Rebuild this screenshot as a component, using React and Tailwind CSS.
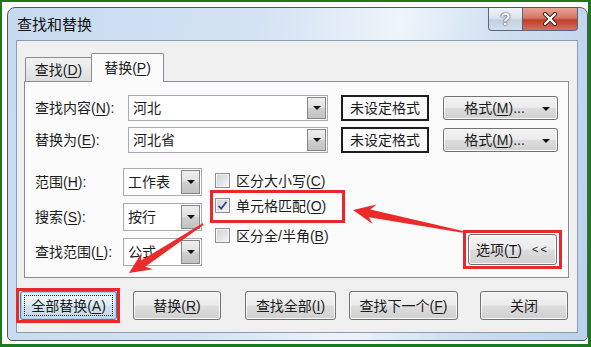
import React from "react";

const U = ({ c }) => <span className="underline underline-offset-[2px] decoration-[1px]">{c}</span>;

const btnCls =
  "flex items-center justify-center rounded-[3px] border border-[#707070] bg-[linear-gradient(#f3f3f3_0%,#ebebeb_48%,#dddddd_52%,#d0d0d0_100%)] shadow-[inset_0_0_0_1px_#fbfbfb] text-[14px] leading-none text-[#1b1b1b]";

function Arrow() {
  return <div className="w-0 h-0 border-x-[4px] border-x-transparent border-t-[4px] border-t-[#111]" />;
}

function DropBtn() {
  return (
    <div className="ml-auto h-full w-[19px] flex items-center justify-center border border-[#858585] bg-[linear-gradient(#eeeeee_0%,#e0e0e0_50%,#cfcfcf_52%,#c2c2c2_100%)]">
      <Arrow />
    </div>
  );
}

function Combo({ text, w }) {
  return (
    <div className={`flex items-center h-full ${w} border border-[#a9abb2] bg-white p-[1px]`}>
      <span className="pl-[3px] text-[14px] leading-none text-[#1b1b1b]">{text}</span>
      <DropBtn />
    </div>
  );
}

function Check({ checked, children }) {
  return (
    <div className="flex items-center h-[25px]">
      <div className="w-[15px] h-[15px] border border-[#8e8f8f] bg-[linear-gradient(135deg,#cdd0d5,#f6f6f6)] shadow-[inset_0_0_0_1px_#f4f4f4] flex items-center justify-center">
        {checked && (
          <svg width="13" height="13" viewBox="0 0 13 13">
            <path d="M2.5 6.8 L5.2 9.6 L10.5 2.8" fill="none" stroke="#2d4786" strokeWidth="1.7" />
          </svg>
        )}
      </div>
      <span className="ml-[6px] text-[14px] leading-none text-[#1b1b1b]">{children}</span>
    </div>
  );
}

function FormatRow({ label, value }) {
  return (
    <div className="flex items-center h-[26px]">
      <div className="w-[93px] text-[14px] leading-none text-[#1b1b1b]">{label}</div>
      <Combo text={value} w="w-[200px]" />
      <div className="ml-[13px] w-[88px] h-full flex items-center justify-center border-2 border-[#1f1f1f] bg-[#fbfbfb] text-[14px] leading-none text-[#1b1b1b]">
        未设定格式
      </div>
      <div className={`${btnCls} ml-[14px] w-[115px] h-[24px] relative`}>
        <span className="pr-[12px]">格式(<U c="M" />)...</span>
        <div className="absolute right-[7px] top-[10px]">
          <Arrow />
        </div>
      </div>
    </div>
  );
}

export default function App() {
  return (
    <div className="relative w-[591px] h-[347px] bg-white border-t-2 border-l-2 border-r-[3px] border-b-[3px] border-[#1c7a1c] overflow-hidden font-['Liberation_Sans','Noto_Sans_CJK_SC',sans-serif]">
      <div className="ml-[5px] mt-[5px] w-[581px] h-[334px] rounded-t-[8px] rounded-b-[5px] border border-[#4a5b70] bg-[linear-gradient(100deg,#c6daef_0%,#d4e3f3_40%,#eef4fb_62%,#cddef0_80%,#bcd2ea_100%)] flex flex-col">
        {/* title bar */}
        <div className="h-[32px] flex items-start">
          <div className="pl-[9px] h-[32px] flex items-center text-[15px] leading-none text-[#111]">查找和替换</div>
          <div className="ml-auto mr-[9px] flex">
            <div className="w-[35px] h-[23px] rounded-bl-[4px] border border-t-0 border-[#56667c] bg-[linear-gradient(#eef3f9_0%,#dbe4ee_45%,#c3d0df_55%,#d3dfeb_100%)] flex items-center justify-center text-[17px] font-bold leading-none text-white [text-shadow:0_0_2px_#2f3d52,0_0_1px_#2f3d52]">
              ?
            </div>
            <div className="w-[55px] h-[23px] rounded-br-[4px] border border-l-0 border-t-0 border-[#56667c] bg-[linear-gradient(#e7a698_0%,#d57564_45%,#c23e2c_55%,#d6705d_100%)] flex items-center justify-center">
              <svg width="16" height="14" viewBox="0 0 16 14">
                <path d="M3 2 L13 12 M13 2 L3 12" stroke="#4a1a14" strokeWidth="4.2" strokeLinecap="round" />
                <path d="M3 2 L13 12 M13 2 L3 12" stroke="#ffffff" strokeWidth="2.4" strokeLinecap="round" />
              </svg>
            </div>
          </div>
        </div>

        {/* client area */}
        <div className="ml-[8px] w-[562px] h-[293px] border border-[#8c9db3] bg-[#f0f0f0] flex flex-col">
          <div className="ml-[7px] w-[545px] mt-[12px]">
            <div className="h-[28px] flex items-end pl-[1px]">
              <div className="w-[67px] h-[24px] border border-b-0 border-[#898c95] rounded-t-[2px] bg-[linear-gradient(#f3f3f3,#dedede)] flex items-center justify-center text-[14px] leading-none text-[#1b1b1b]">
                查找(<U c="D" />)
              </div>
              <div className="relative z-10 -ml-[1px] -mb-[1px] w-[73px] h-[29px] border border-b-0 border-[#898c95] rounded-t-[2px] bg-[#fbfbfb] flex items-center justify-center pb-[1px] text-[14px] leading-none text-[#1b1b1b]">
                替换(<U c="P" />)
              </div>
            </div>

            <div className="h-[197px] border border-[#898c95] bg-[#fbfbfb] px-[10px] flex flex-col">
              <div className="mt-[13px]">
                <FormatRow label={<>查找内容(<U c="N" />):</>} value="河北" />
              </div>
              <div className="mt-[6px]">
                <FormatRow label={<>替换为(<U c="E" />):</>} value="河北省" />
              </div>

              <div className="mt-[15px] flex h-[98px]">
                <div className="flex flex-col gap-[7px]">
                  {[
                    [<>范围(<U c="H" />):</>, "工作表"],
                    [<>搜索(<U c="S" />):</>, "按行"],
                    [<>查找范围(<U c="L" />):</>, "公式"],
                  ].map(([l, v], i) => (
                    <div key={i} className="flex items-center h-[28px]">
                      <div className="w-[88px] text-[14px] leading-none text-[#1b1b1b]">{l}</div>
                      <Combo text={v} w="w-[79px]" />
                    </div>
                  ))}
                </div>

                <div className="ml-[13px] flex flex-col">
                  <Check>区分大小写(<U c="C" />)</Check>
                  <Check checked>单元格匹配(<U c="O" />)</Check>
                  <div className="mt-[5px]">
                    <Check>区分全/半角(<U c="B" />)</Check>
                  </div>
                </div>

                <div className={`${btnCls} ml-auto self-end mb-[1px] mr-[1px] w-[89px] h-[31px]`}>
                  <span>选项(<U c="T" />)</span>
                  <span className="ml-[10px] text-[11px] tracking-[2px]">&lt;&lt;</span>
                </div>
              </div>
            </div>
          </div>

          {/* bottom buttons */}
          <div className="mt-[13px] flex h-[29px]">
            <div className="ml-[3px] w-[97px] h-full rounded-[3px] border border-[#3c7fb1] bg-[linear-gradient(#eef6fb_0%,#e2eef6_48%,#d2e2ee_52%,#c6d9e7_100%)] shadow-[inset_0_0_0_1px_#9fd6f5] p-[3px]">
              <div className="w-full h-full border border-dotted border-[#222] flex items-center justify-center text-[14px] leading-none text-[#1b1b1b]">
                全部替换(<U c="A" />)
              </div>
            </div>
            <div className={`${btnCls} ml-[16px] w-[88px] h-full`}>替换(<U c="R" />)</div>
            <div className={`${btnCls} ml-[24px] w-[91px] h-full`}>查找全部(<U c="I" />)</div>
            <div className={`${btnCls} ml-[13px] w-[109px] h-full`}>查找下一个(<U c="F" />)</div>
            <div className={`${btnCls} ml-[22px] w-[88px] h-full`}>关闭</div>
          </div>
        </div>
      </div>

      {/* annotations */}
      <div className="absolute left-[208px] top-[188px] w-[135px] h-[33px] border-[3px] border-[#e8282a]" />
      <div className="absolute left-[461px] top-[228px] w-[99px] h-[39px] border-[3px] border-[#e8282a]" />
      <div className="absolute left-[14px] top-[286px] w-[104px] h-[35px] border-[3px] border-[#e8282a]" />
      <svg className="absolute -left-[2px] -top-[2px] pointer-events-none" width="591" height="347" viewBox="0 0 591 347">
        <g transform="translate(353 210) rotate(11.3)" fill="#ea2b2b">
          <polygon points="0,0 22,-10 17,-4 112,-0.9 112,0.9 17,4 22,10" />
        </g>
        <g transform="translate(129 273) rotate(-33.5)" fill="#ea2b2b">
          <polygon points="0,0 22,-10 17,-3.8 89,-0.9 89,0.9 17,3.8 22,10" />
        </g>
      </svg>
    </div>
  );
}
